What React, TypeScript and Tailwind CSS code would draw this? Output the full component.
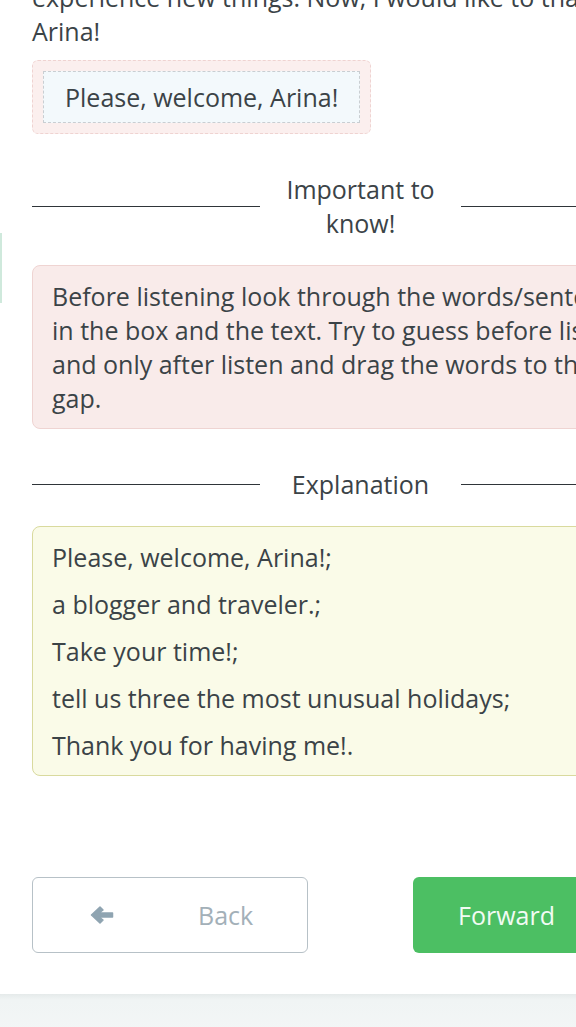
import React from 'react';

const Divider = ({ title }: { title: string }) => (
  <div className="flex items-center">
    <div className="h-px flex-1 bg-[#2f3539]" />
    <div className="w-[201px] px-[20px] text-center">{title}</div>
    <div className="h-px flex-1 bg-[#2f3539]" />
  </div>
);

const explanation = [
  'Please, welcome, Arina!;',
  'a blogger and traveler.;',
  'Take your time!;',
  'tell us three the most unusual holidays;',
  'Thank you for having me!.',
];

const App = () => {
  return (
    <div
      className="relative h-[1027px] w-[576px] overflow-hidden bg-white text-[25px] leading-[34px] text-[#3b4347]"
      style={{ fontFamily: '"Open Sans", "Noto Sans", sans-serif' }}
    >
      {/* edge of a side panel peeking in */}
      <div className="absolute left-0 top-[233px] h-[70px] w-[2px] bg-[#cfe9dc]" />

      <div className="w-[689px] pl-8">
        <p className="-mt-[20px] whitespace-nowrap">
          experience new things. Now, I would like to thank our guest,
          <br />
          Arina!
        </p>

        <div className="mt-[12px] inline-block rounded-[6px] border border-dashed border-[#efd3d1] bg-[#fbefee] p-[10px]">
          <div className="border border-dashed border-[#c9ced2] bg-[#f3f9fc] px-[21px] py-[8px]">
            Please, welcome, Arina!
          </div>
        </div>

        <div className="mt-[38px]">
          <Divider title="Important to know!" />
        </div>

        <div className="mt-[25px] whitespace-nowrap rounded-[8px] border border-[#efd4d2] bg-[#f9ebea] px-[19px] py-[13px]">
          Before listening look through the words/sentences
          <br />
          in the box and the text. Try to guess before listening
          <br />
          and only after listen and drag the words to the right
          <br />
          gap.
        </div>

        <div className="mt-[38px]">
          <Divider title="Explanation" />
        </div>

        <div className="mt-[25px] flex flex-col gap-[13px] rounded-[8px] border border-[#d9da9e] bg-[#fafbe8] px-[19px] py-[13px]">
          {explanation.map((item) => (
            <div key={item}>{item}</div>
          ))}
        </div>

        <div className="mt-[101px] flex gap-[105px]">
          <button className="flex h-[76px] w-[276px] items-center rounded-[6px] border border-[#b7c1c7] bg-white pl-[57px] text-[#a3b0b8]">
            <svg width="24" height="20" viewBox="0 0 24 20" className="shrink-0">
              <path
                d="M1.5 10 L10 2 L13 5 L9 8 H22.5 V12 H9 L13 15 L10 18 Z"
                fill="#8fa4b1"
                stroke="#8fa4b1"
                strokeWidth="1.5"
                strokeLinejoin="round"
              />
            </svg>
            <span className="ml-[84px]">Back</span>
          </button>
          <button className="flex h-[76px] w-[276px] items-center rounded-[6px] bg-[#4cbf63] pl-[45px] text-[#f1fbf3]">
            <span>Forward</span>
            <svg width="24" height="20" viewBox="0 0 24 20" className="ml-auto mr-[27px] shrink-0">
              <path
                d="M22.5 10 L14 2 L11 5 L15 8 H1.5 V12 H15 L11 15 L14 18 Z"
                fill="#f1fbf3"
                stroke="#f1fbf3"
                strokeWidth="1.5"
                strokeLinejoin="round"
              />
            </svg>
          </button>
        </div>
      </div>

      <div className="mt-[41px] h-[40px] w-full bg-[linear-gradient(#e5eaea,#f0f4f4_6px,#f3f6f6)]" />
    </div>
  );
};

export default App;
